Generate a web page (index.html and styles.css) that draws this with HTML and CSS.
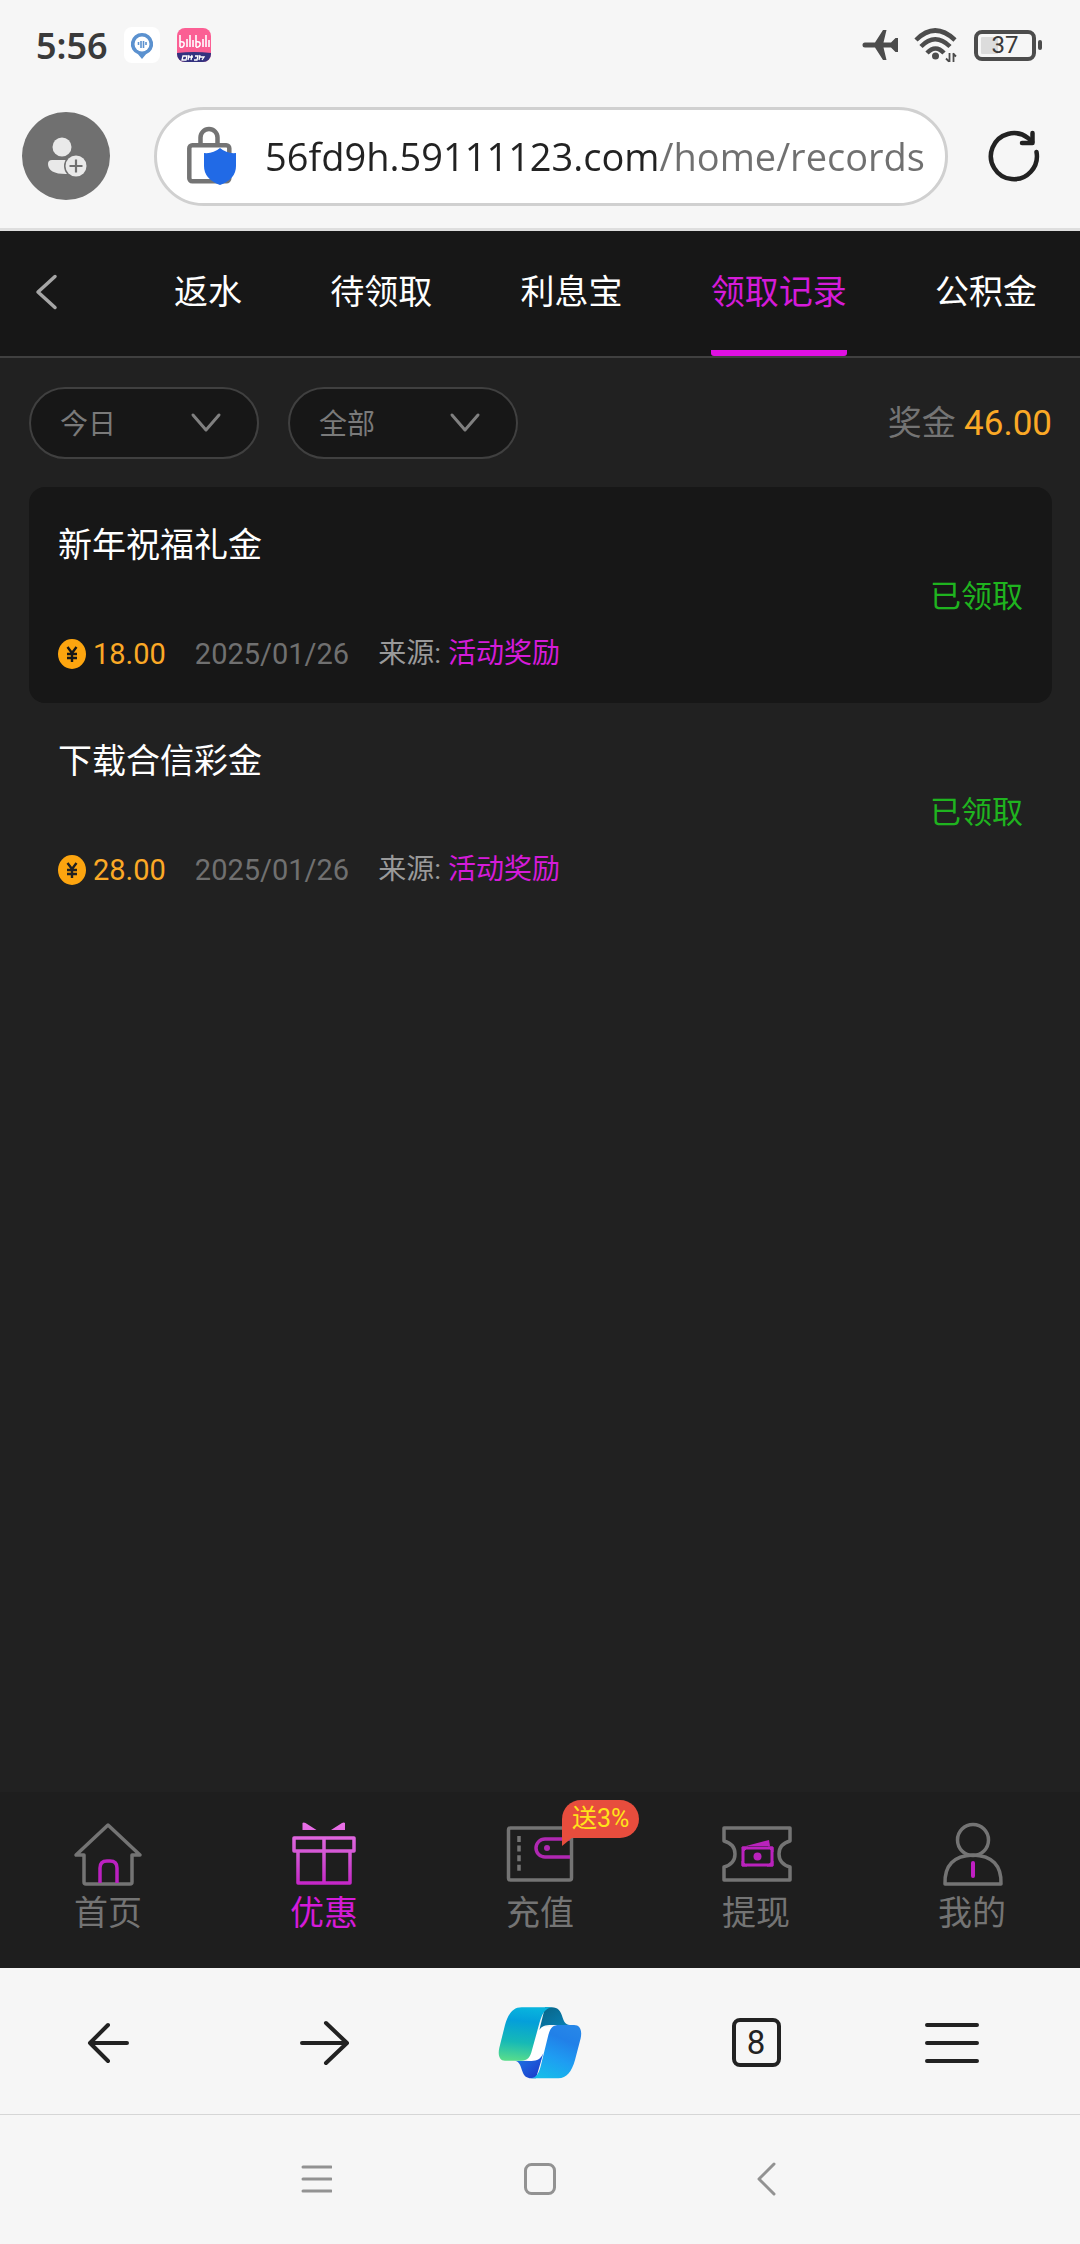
FILE: index.html
```html
<!DOCTYPE html>
<html lang="zh-CN">
<head>
<meta charset="utf-8">
<meta name="viewport" content="width=device-width, initial-scale=1">
<title>领取记录</title>
<link rel="stylesheet" href="styles.css">
</head>
<body>
<div class="status-bar">
  <time class="clock">5:56</time>
  <svg class="app-icon" viewBox="0 0 36 36" aria-hidden="true">
    <rect width="36" height="36" rx="8" fill="#fff"/>
    <path d="M18 6a11 11 0 0 0-4 21.300l4 4.700 4-4.700A11 11 0 0 0 18 6z" fill="#5b91cf"/>
    <circle cx="18" cy="17" r="7.500" fill="#fff"/>
    <path d="M14.500 15v3M17 14v7M19.500 14v7M22 15v3" stroke="#5b91cf" stroke-width="1.600"/>
  </svg>
  <svg class="app-icon" viewBox="0 0 36 36" aria-hidden="true">
    <defs><clipPath id="app-clip"><rect x="1" y="1" width="34" height="34" rx="8"/></clipPath></defs>
    <g clip-path="url(#app-clip)">
      <rect width="36" height="36" fill="#fb5f94"/>
      <path d="M0 26q18-2 36 0v10H0z" fill="#33327f"/>
      <path d="M4 8v12M4 15q5-1 4 3-1 3-4 2M11 12v8M14 8v12M17 13v7M20 8v12M20 15q5-1 4 3-1 3-4 2M27 12v8M30 8v12M33 13v7" fill="none" stroke="#fff" stroke-width="1.600"/>
      <path d="M7 29h4l-1 4H6zM13 28l-1 5M12 30h5M16 28l-1 5M19 29h3l-1 4h-3M24 28l-1 5M23 30h5l-2 3" fill="none" stroke="#fff" stroke-width="1.300"/>
    </g>
  </svg>
  <div class="status-icons">
    <svg width="36" height="32" viewBox="0 0 36 32" fill="#4c4c4c" aria-label="飞行模式">
      <path d="M3 13.500h10L21 1h3.500l-3 12.500H29L33.500 9H36v14h-2.500L29 18.500h-7.500L24.500 31H21l-8-12.500H3a2.500 2.500 0 0 1 0-5z"/>
    </svg>
    <svg width="44" height="36" viewBox="0 0 44 36" fill="none" stroke="#4c4c4c" stroke-width="4.500" aria-label="无线网络">
      <path d="M2 13Q21-6 41 13M7 19.500Q21 5 36 19.500M13 26q8.500-9 17 0"/>
      <circle cx="21.500" cy="29" r="3.500" fill="#4c4c4c" stroke="none"/>
      <path d="M35.500 26v9M32 31.500l3 3M39.500 35v-9M39 26.500l3 3" stroke-width="1.800"/>
    </svg>
    <div class="battery"><span>37</span></div>
  </div>
</div>

<header class="browser-bar">
  <button class="profile" aria-label="登录">
    <svg width="88" height="88" viewBox="0 0 88 88">
      <circle cx="40" cy="35" r="9.500" fill="#e9e9e9"/>
      <path d="M30 48h30v14H44q-18 0-18-10 0-4 4-4z" fill="#e9e9e9"/>
      <circle cx="54" cy="54" r="12" fill="#707070"/>
      <circle cx="54" cy="54" r="10.500" fill="#e9e9e9"/>
      <path d="M54 47.500v13M47.500 54h13" stroke="#707070" stroke-width="2.200"/>
    </svg>
  </button>
  <div class="address">
    <svg width="50" height="60" viewBox="0 0 50 60" aria-hidden="true">
      <path d="M13.500 20V11.500a8.500 8.500 0 0 1 17 0V20" fill="none" stroke="#747474" stroke-width="4.500"/>
      <rect x="2.300" y="19.300" width="40" height="36" rx="3" fill="none" stroke="#747474" stroke-width="4.500"/>
      <path d="M33 22q7 6 16 5v13q0 13-16 19-16-6-16-19V27q9 1 16-5z" fill="#216ae6"/>
    </svg>
    <input class="url" type="text" aria-label="网址" value="56fd9h.59111123.com/home/records">
  </div>
  <button class="icon-button" aria-label="刷新">
    <svg width="56" height="56" viewBox="0 0 56 56" fill="none" stroke="#222" stroke-width="4.500" stroke-linecap="round" stroke-linejoin="round">
      <path d="M50.500 24A23 23 0 1 1 42 10q2 1.500 4 4"/>
      <path d="M46.500 5v10H36"/>
    </svg>
  </button>
</header>

<nav class="tabs" aria-label="优惠分类">
  <button class="back" aria-label="返回">
    <svg width="24" height="38" viewBox="0 0 24 38" fill="none" stroke="#a6a6a6" stroke-width="3.500" stroke-linecap="round" stroke-linejoin="round"><path d="M21 3.500 4 19l17 15.500"/></svg>
  </button>
  <div class="tab-list">
    <a href="#">返水</a>
    <a href="#">待领取</a>
    <a href="#">利息宝</a>
    <a href="#" class="active" aria-current="page">领取记录</a>
    <a href="#">公积金</a>
  </div>
</nav>

<main class="content">
  <div class="filters">
    <label class="filter">
      <select aria-label="日期"><option>今日</option></select>
      <svg width="32" height="22" viewBox="0 0 32 22" fill="none" stroke="#808080" stroke-width="3" stroke-linecap="round" stroke-linejoin="round"><path d="M3 3l13 15L29 3"/></svg>
    </label>
    <label class="filter">
      <select aria-label="类型"><option>全部</option></select>
      <svg width="32" height="22" viewBox="0 0 32 22" fill="none" stroke="#808080" stroke-width="3" stroke-linecap="round" stroke-linejoin="round"><path d="M3 3l13 15L29 3"/></svg>
    </label>
    <p class="total">奖金 <strong>46.00</strong></p>
  </div>

  <ul class="records">
    <li class="record">
      <div class="details">
        <h2>新年祝福礼金</h2>
        <div class="meta">
          <span class="amount">
            <svg width="28" height="30" viewBox="0 0 28 30" aria-hidden="true"><ellipse cx="14" cy="15" rx="14" ry="15" fill="#fda50f"/><path d="M9.500 8l4.500 6 4.500-6M14 14v9M9 15h10M9 19h10" fill="none" stroke="#171717" stroke-width="2.400"/></svg>
            18.00
          </span>
          <time>2025/01/26</time>
          <span class="source">来源: <em>活动奖励</em></span>
        </div>
      </div>
      <span class="state">已领取</span>
    </li>
    <li class="record">
      <div class="details">
        <h2>下载合信彩金</h2>
        <div class="meta">
          <span class="amount">
            <svg width="28" height="30" viewBox="0 0 28 30" aria-hidden="true"><ellipse cx="14" cy="15" rx="14" ry="15" fill="#fda50f"/><path d="M9.500 8l4.500 6 4.500-6M14 14v9M9 15h10M9 19h10" fill="none" stroke="#212121" stroke-width="2.400"/></svg>
            28.00
          </span>
          <time>2025/01/26</time>
          <span class="source">来源: <em>活动奖励</em></span>
        </div>
      </div>
      <span class="state">已领取</span>
    </li>
  </ul>
</main>

<nav class="bottom-nav" aria-label="主导航">
  <a href="#">
    <svg width="72" height="66" viewBox="0 0 72 66" fill="none" stroke="#747474" stroke-width="3.500" stroke-linejoin="round">
      <path d="M36 3 4 33h8v27q0 2 2 2h44q2 0 2-2V33h8z"/>
      <path d="M28 61V46q0-7 7-7h3q7 0 7 7v15" stroke="#bb20c0"/>
    </svg>
    首页
  </a>
  <a href="#" class="active">
    <svg width="72" height="66" viewBox="0 0 72 66" fill="none" stroke-width="3.500" stroke-linejoin="round">
      <defs><linearGradient id="gift" gradientUnits="userSpaceOnUse" x1="0" y1="2" x2="0" y2="64"><stop stop-color="#ea70e8"/><stop offset=".5" stop-color="#d256d3"/><stop offset="1" stop-color="#c423c7"/></linearGradient></defs>
      <path d="M14.500 1q1-1 3 0l11 7H14.500zM57 1q-1-1-3 0L43 8h14z" fill="url(#gift)"/>
      <path d="M6 16h60v13H6zM10 29v32h52V29M36 16v45" stroke="url(#gift)"/>
    </svg>
    优惠
  </a>
  <a href="#">
    <svg width="72" height="66" viewBox="0 0 72 66" fill="none" stroke="#747474" stroke-width="3.500">
      <rect x="4.500" y="6" width="63" height="52" rx="2"/>
      <path d="M15 14v37" stroke-dasharray="6 3.600"/>
      <path d="M66 17H41a9 9 0 0 0 0 18h25" stroke="#b028b2"/>
      <circle cx="43" cy="26" r="3" fill="#b028b2" stroke="none"/>
    </svg>
    <span class="badge">送3%</span>
    充值
  </a>
  <a href="#">
    <svg width="72" height="66" viewBox="0 0 72 66" fill="none" stroke="#747474" stroke-width="3.500" stroke-linejoin="round">
      <path d="M4 6h66v13q-11 3-11 13t11 13v13H4V45q11-3 11-13T4 19z"/>
      <path d="M23 26h29v17H23z" stroke="#ba22bd" stroke-width="3"/>
      <path d="M22 25h6l-5 5zM53 25v5l-5-5zM22 44v-5l5 5zM53 44h-6l6-5z" fill="#ba22bd" stroke="#ba22bd" stroke-width="1"/>
      <path d="M26 24l23-6 1 6z" fill="#ba22bd" stroke="none"/>
      <circle cx="37.500" cy="34.500" r="4" fill="#ba22bd" stroke="none"/>
    </svg>
    提现
  </a>
  <a href="#">
    <svg width="72" height="66" viewBox="0 0 72 66" fill="none" stroke="#747474" stroke-width="3.500" stroke-linejoin="round">
      <circle cx="37" cy="18" r="15.500"/>
      <path d="M9 62q-1-28 28-29 29 1 28 29z"/>
      <path d="M37 41v13" stroke="#c01fc3" stroke-width="4" stroke-linecap="round"/>
    </svg>
    我的
  </a>
</nav>

<footer class="browser-tools">
  <button aria-label="后退"><svg width="48" height="48" viewBox="0 0 48 48" fill="none" stroke="#222" stroke-width="4" stroke-linecap="round" stroke-linejoin="round"><path d="M43 24H6M24 6 6 24l18 18"/></svg></button>
  <button aria-label="前进"><svg width="52" height="48" viewBox="0 0 52 48" fill="none" stroke="#222" stroke-width="4" stroke-linecap="round" stroke-linejoin="round"><path d="M4 24h44M28 4l21 20-21 20"/></svg></button>
  <button aria-label="Copilot">
    <svg width="100" height="92" viewBox="0 0 300 276">
      <defs>
        <linearGradient id="ribbon-left" x1=".4" y1="0" x2=".3" y2="1"><stop stop-color="#08b4de"/><stop offset=".25" stop-color="#049fda"/><stop offset=".65" stop-color="#16b9b6"/><stop offset="1" stop-color="#57dc8c"/></linearGradient>
        <linearGradient id="ribbon-right" x1=".7" y1="0" x2=".3" y2="1"><stop stop-color="#2686e8"/><stop offset=".25" stop-color="#2180e8"/><stop offset=".6" stop-color="#1e9cf2"/><stop offset="1" stop-color="#16bbea"/></linearGradient>
        <linearGradient id="fold-top" x1="0" y1="0" x2="1" y2="1"><stop stop-color="#096384"/><stop offset="1" stop-color="#0885bd"/></linearGradient>
        <linearGradient id="fold-bottom" x1="0" y1="0" x2="1" y2="1"><stop stop-color="#1b7ee8"/><stop offset="1" stop-color="#1c34c8"/></linearGradient>
      </defs>
      <path d="M110 194l38-104h50l-36 104z" fill="#fff"/>
      <path d="M165 31h20c20 0 27 12 33 31 5 16 12 22 27 22h-60c-20 0-30 3-37 15z" fill="url(#fold-top)"/>
      <path d="M75 191c14 3 17 16 22 32 5 15 14 21 26 21h15l22-75c-8 17-18 23-36 23z" fill="url(#fold-bottom)"/>
      <path d="M95 31h92c-22 2-31 20-39 48l-22 80c-6 23-13 32-33 32H45c-17 0-22-17-17-39l17-68c10-35 25-53 50-53z" fill="url(#ribbon-left)"/>
      <path d="M205 244h-83c20-2 26-20 31-40l20-82c7-28 13-38 35-38h44c18 0 25 15 20 40l-17 65c-10 35-25 55-50 55z" fill="url(#ribbon-right)"/>
    </svg>
  </button>
  <button aria-label="标签页"><span class="tab-count">8</span></button>
  <button aria-label="菜单" class="menu"><svg width="56" height="44" viewBox="0 0 56 44" stroke="#222" stroke-width="4" stroke-linecap="round"><path d="M3 4h50M3 22h50M3 40h50"/></svg></button>
</footer>

<div class="system-nav">
  <button aria-label="最近任务"><svg width="32" height="34" viewBox="0 0 32 34" stroke="#929292" stroke-width="3" stroke-linecap="round"><path d="M3 5h28M3 17h28M3 29h28"/></svg></button>
  <button aria-label="主屏幕"><svg width="34" height="34" viewBox="0 0 34 34" fill="none" stroke="#929292" stroke-width="3"><rect x="2.500" y="2.500" width="29" height="29" rx="6"/></svg></button>
  <button aria-label="返回"><svg width="24" height="34" viewBox="0 0 24 34" fill="none" stroke="#929292" stroke-width="3" stroke-linecap="round" stroke-linejoin="round"><path d="M22 2 7 17l15 15"/></svg></button>
</div>
</body>
</html>
```

FILE: styles.css
```css
* {
  box-sizing: border-box;
}

body {
  display: flex;
  flex-direction: column;
  min-height: 100vh;
  margin: 0;
  background: #f6f6f6;
  color: #fff;
  font-family: Roboto, "Noto Sans CJK SC", sans-serif;
  font-size: 29px;
}

button {
  display: flex;
  align-items: center;
  justify-content: center;
  padding: 0;
  border: 0;
  background: none;
  color: inherit;
  font: inherit;
}

a {
  color: inherit;
  text-decoration: none;
}

svg {
  display: block;
  flex: none;
}

/* Phone status bar */
.status-bar {
  display: flex;
  align-items: center;
  gap: 16px;
  height: 90px;
  padding: 0 38px 0 36px;
  color: #3a3a3a;
}

.clock {
  font-family: "Noto Sans", sans-serif;
  font-size: 36px;
  font-weight: 600;
}

.app-icon {
  width: 36px;
  height: 36px;
}

.status-icons {
  display: flex;
  align-items: center;
  gap: 16px;
  margin-left: auto;
}

.battery {
  position: relative;
  display: flex;
  align-items: center;
  justify-content: center;
  width: 62px;
  height: 31px;
  margin-right: 6px;
  border: 4px solid #4c4c4c;
  border-radius: 8px;
  background: linear-gradient(90deg, #dcdcdc 20px, transparent 20px);
  background-clip: content-box;
  padding: 3px;
  font-size: 24px;
  line-height: 20px;
}

.battery::after {
  content: "";
  position: absolute;
  right: -10px;
  width: 4px;
  height: 10px;
  border-radius: 2px;
  background: #4c4c4c;
}

/* Browser address bar */
.browser-bar {
  display: flex;
  align-items: center;
  height: 141px;
  padding: 0 38px 6px 22px;
  border-bottom: 3px solid #dedede;
}

.profile {
  width: 88px;
  height: 88px;
  border-radius: 50%;
  background: #707070;
}

.address {
  display: flex;
  flex: 1;
  align-items: center;
  gap: 28px;
  min-width: 0;
  height: 99px;
  margin: 0 38px 0 44px;
  padding: 0 20px 0 30px;
  border: 3px solid #d0d0d0;
  border-radius: 50px;
  background: #fff;
}

.url {
  flex: 1;
  min-width: 0;
  padding: 0;
  border: 0;
  outline: 0;
  background: linear-gradient(90deg, #222 395px, #707070 395px);
  background-clip: text;
  -webkit-text-fill-color: transparent;
  color: #222;
  font-family: "Open Sans", sans-serif;
  font-size: 38px;
  line-height: 60px;
}

/* Category tabs */
.tabs {
  display: flex;
  align-items: stretch;
  height: 127px;
  padding: 0 43px 0 34px;
  border-bottom: 2px solid #404040;
  background: #171717;
}

.back {
  padding-bottom: 4px;
}

.tab-list {
  display: flex;
  flex: 1;
  justify-content: space-between;
  margin-left: 116px;
  font-size: 34px;
}

.tab-list a {
  padding-top: 36px;
  border-bottom: 6px solid transparent;
  line-height: 50px;
  white-space: nowrap;
}

.tab-list .active {
  color: #d51bd9;
  background: linear-gradient(#df0fe2, #df0fe2) bottom / 100% 6px no-repeat border-box;
  border-radius: 3px;
}

/* Records page */
.content {
  flex: 1;
  padding: 29px 28px 29px 29px;
  background: #212121;
}

.filters {
  display: flex;
  align-items: center;
  gap: 29px;
  margin-bottom: 28px;
}

.filter {
  display: grid;
  align-items: center;
  width: 230px;
}

.filter > * {
  grid-area: 1 / 1;
}

.filter svg {
  justify-self: end;
  margin-right: 37px;
  pointer-events: none;
}

.filter select {
  height: 72px;
  padding: 2px 60px 0 29px;
  border: 2px solid #404040;
  border-radius: 36px;
  appearance: none;
  background: #171717;
  color: #7a7a7a;
  font: inherit;
  font-size: 28px;
}

.total {
  margin: 0 0 0 auto;
  color: #747474;
  font-size: 34px;
  line-height: 50px;
}

.total strong {
  color: #fba926;
  font-size: 35px;
  font-weight: 400;
}

.records {
  margin: 0;
  padding: 0;
  list-style: none;
}

.record {
  display: flex;
  align-items: center;
  justify-content: space-between;
  height: 216px;
  padding: 0 29px;
  border-radius: 16px;
}

.record:nth-child(odd) {
  background: #171717;
}

.details h2 {
  margin: 4px 0 63px;
  font-size: 34px;
  font-weight: 400;
  line-height: 50px;
}

.meta {
  display: flex;
  gap: 29px;
  color: #707070;
  line-height: 42px;
}

.amount {
  display: flex;
  align-items: center;
  gap: 7px;
  color: #fba926;
}

.source {
  color: #9a9a9a;
  font-size: 28px;
}

.source em {
  color: #d51bd9;
  font-style: normal;
}

.state {
  padding-bottom: 3px;
  color: #1fb41f;
  font-size: 31px;
}

/* Site navigation */
.bottom-nav {
  display: grid;
  grid-template-columns: repeat(5, 1fr);
  padding: 30px 0;
  background: #1e1e1e;
  color: #747474;
  font-size: 34px;
  line-height: 50px;
}

.bottom-nav a {
  position: relative;
  display: flex;
  flex-direction: column;
  align-items: center;
}

.bottom-nav .active {
  color: #d51bd9;
}

.badge {
  position: absolute;
  top: -22px;
  left: calc(50% + 22px);
  padding: 0 10px;
  border-radius: 19px 19px 19px 0;
  background: #e74d3d;
  color: #ffe31a;
  font-size: 25px;
  line-height: 38px;
  white-space: nowrap;
}

.badge::after {
  content: "";
  position: absolute;
  top: 37px;
  left: 0;
  border-top: 9px solid #e74d3d;
  border-right: 11px solid transparent;
}

/* Browser toolbar */
.browser-tools {
  display: grid;
  grid-template-columns: repeat(5, 1fr);
  height: 147px;
  padding-top: 3px;
  border-bottom: 1px solid #d6d6d6;
  color: #222;
}

.browser-tools .menu {
  padding-right: 40px;
}

.tab-count {
  width: 49px;
  height: 49px;
  border: 4px solid #222;
  border-radius: 8px;
  font-size: 33px;
  line-height: 42px;
}

/* Phone navigation buttons */
.system-nav {
  display: grid;
  grid-template-columns: repeat(3, 224px);
  justify-content: center;
  height: 129px;
  padding-bottom: 2px;
}
```
